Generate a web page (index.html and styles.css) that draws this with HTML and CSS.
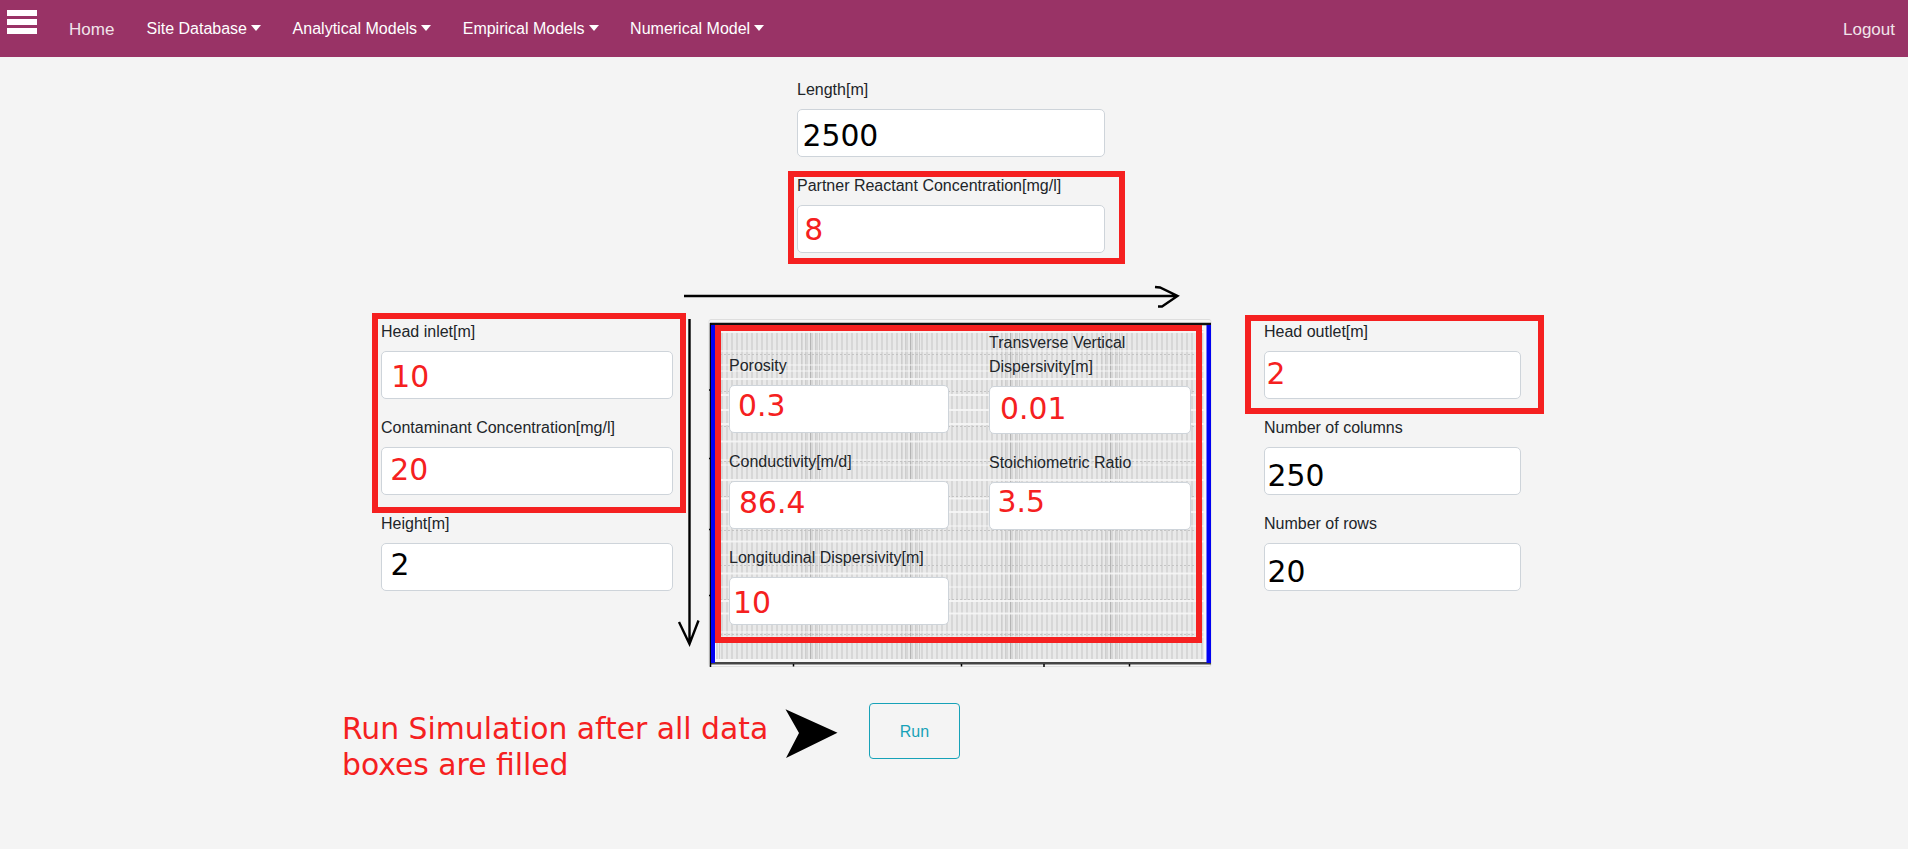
FILE: index.html
```html
<!DOCTYPE html>
<html lang="en">
<head>
<meta charset="utf-8">
<title>Numerical Model</title>
<link rel="stylesheet" href="styles.css">
</head>
<body>
<nav class="navbar">
  <div class="burger"><i></i><i></i><i></i></div>
  <a class="nav-home">Home</a>
  <a class="nav-menu">Site Database</a>
  <a class="nav-menu">Analytical Models</a>
  <a class="nav-menu">Empirical Models</a>
  <a class="nav-menu">Numerical Model</a>
  <a class="nav-logout">Logout</a>
</nav>
<main class="page">
  <section class="top fields">
    <div class="field"><label>Length[m]</label><div class="input"></div></div>
    <div class="field"><label>Partner Reactant Concentration[mg/l]</label><div class="input"></div></div>
  </section>
  <div class="model">
    <section class="left fields">
      <div class="field"><label>Head inlet[m]</label><div class="input"></div></div>
      <div class="field"><label>Contaminant Concentration[mg/l]</label><div class="input"></div></div>
      <div class="field"><label>Height[m]</label><div class="input"></div></div>
    </section>
    <section class="aquifer">
      <svg class="mesh" width="504" height="350" viewBox="708 318 504 350">
        <defs>
          <pattern id="cols" width="5" height="8" patternUnits="userSpaceOnUse"><path d="M1 0h2v8h-2z" fill="#d7d7d7"/></pattern>
          <pattern id="cols2" width="100" height="8" patternUnits="userSpaceOnUse"><path d="M1.500 0v8M5.500 0v8M15.500 0v8M19.500 0v8" stroke="#cdcdcd"/><path d="M10.500 0v8" stroke="#b4b4b4"/></pattern>
        </defs>
        <rect x="709" y="319.5" width="502" height="347" rx="2" fill="#f7f7f7" stroke="#dedede"/>
        <rect x="716" y="330" width="488" height="329" fill="#e9e9e9"/>
        <rect x="716" y="330" width="488" height="329" fill="url(#cols)"/>
        <rect x="716" y="330" width="488" height="329" fill="url(#cols2)"/>
        <path d="M716 332h488M716 379h488M716 395h488M716 410h488M716 424h488M716 441.500h488M716 480h488M716 498.500h488M716 512h488M716 541.500h488M716 573.500h488M716 601h488M716 613.500h488" stroke="#f8f8f8" stroke-width="2" opacity=".85"/>
        <path d="M716 351h488M716 365h488M716 371h488M716 460h488M716 465h488M716 526h488M716 555h488M716 587h488M716 632h488M716 637h488" stroke="#fafafa" stroke-width="2" opacity=".45"/>
        <path d="M716 354.500h488M716 391.500h488M716 426.500h488M716 461.500h488M716 496.500h488M716 530.500h488M716 565.500h488M716 599.500h488M716 634.500h488" stroke="#bdbdbd" stroke-dasharray="2 2" opacity=".8"/>
        <path d="M710 324h501" stroke="#111" stroke-width="2.4"/>
        <path d="M710 663.3h501" stroke="#444" stroke-width="2.4"/>
        <path d="M710.5 323v344M709 390h2M709 458.500h2M709 529.500h2M709 595.500h2M793.500 664v2.500M961.500 664v2.500M1044 664v3M1129.500 664v2.500" stroke="#000" stroke-width="1.500"/>
        <path d="M711 325h4v338h-4zM1206.500 325h4.500v338h-4.500z" fill="#0202f2"/>
      </svg>
      <div class="aq-a fields">
        <div class="field"><label>Porosity</label><div class="input"></div></div>
        <div class="field"><label>Conductivity[m/d]</label><div class="input"></div></div>
        <div class="field"><label>Longitudinal Dispersivity[m]</label><div class="input"></div></div>
      </div>
      <div class="aq-b fields">
        <div class="field"><label>Transverse Vertical Dispersivity[m]</label><div class="input"></div></div>
        <div class="field"><label>Stoichiometric Ratio</label><div class="input"></div></div>
      </div>
    </section>
    <section class="right fields">
      <div class="field"><label>Head outlet[m]</label><div class="input"></div></div>
      <div class="field"><label>Number of columns</label><div class="input"></div></div>
      <div class="field"><label>Number of rows</label><div class="input"></div></div>
    </section>
  </div>
  <button class="run">Run</button>
</main>
<svg class="notes" width="1908" height="849" viewBox="0 0 1908 849">
  <g class="arrows">
    <path d="M684 296h493M1155 287l5 .5L1177.500 296L1162 306.500h-4"/>
    <path d="M689.500 319v324M679 622l10.500 22L698.500 620.500"/>
  </g>
  <path d="M785.500 709.300L837.500 732.800L786 758L799 733z"/>
  <g class="frames">
    <rect x="791" y="174" width="331" height="87"/>
    <rect x="375" y="316" width="308" height="194"/>
    <rect x="718" y="328" width="481" height="312"/>
    <rect x="1248" y="318" width="293" height="93"/>
  </g>
  <g class="values">
    <text x="802.500" y="146">2500</text>
    <text x="390.500" y="575">2</text>
    <text x="1267.500" y="486">250</text>
    <text x="1267.500" y="582">20</text>
  </g>
  <g class="values key">
    <text x="804.300" y="239.500">8</text>
    <text x="391.300" y="387">10</text>
    <text x="390.300" y="480">20</text>
    <text x="738" y="415.500">0.3</text>
    <text x="739" y="512.500">86.4</text>
    <text x="733" y="613">10</text>
    <text x="1000" y="418.500">0.01</text>
    <text x="997.500" y="511.500">3.5</text>
    <text x="1266.500" y="384">2</text>
    <text x="342" y="739">Run Simulation after all data</text>
    <text x="342" y="775">boxes are filled</text>
  </g>
</svg>
</body>
</html>
```
FILE: styles.css
```css
* { box-sizing: border-box; }
body {
  margin: 0;
  height: 849px;
  overflow: hidden;
  background: #f4f4f4;
  color: #212529;
  font: 16px/24px "Liberation Sans", Arial, sans-serif;
}
.navbar {
  display: flex;
  height: 57px;
  padding: 0 13px 0 7px;
  background: #993366;
  color: #f1e4ea;
  line-height: 57px;
}
.burger {
  display: flex;
  flex-direction: column;
  gap: 3.5px;
  width: 30px;
  margin-right: 32px;
  padding-top: 10px;
}
.burger i { height: 5.5px; background: #fff; }
.nav-home, .nav-logout { font-size: 17px; line-height: 59px; }
.nav-home { width: 77.5px; }
.nav-logout { margin-left: auto; }
.nav-menu { margin-right: 31.6px; color: #fff; }
.nav-menu::after {
  content: "";
  display: inline-block;
  margin-left: 4px;
  vertical-align: 3px;
  border-top: 6px solid;
  border-left: 5px solid transparent;
  border-right: 5px solid transparent;
}
.page { padding-top: 20px; }
.fields { display: flex; flex-direction: column; gap: 16px; }
.field label { display: block; padding-top: 1px; margin-bottom: 7px; }
.input {
  height: 48px;
  border: 1px solid #ced4da;
  border-radius: 5px;
  background: #fff;
}
.top { width: 308px; margin-left: 797px; }
.model {
  display: flex;
  align-items: flex-start;
  height: 350px;
  margin: 65px 0 0 381px;
}
.left { width: 292px; margin: 1px 35px 0 0; }
.aquifer {
  display: grid;
  grid-template-columns: 220px 202px;
  column-gap: 40px;
  align-items: start;
  width: 504px;
  height: 350px;
  padding-left: 21px;
}
.mesh { grid-area: 1 / 1; margin-left: -21px; }
.aq-a { grid-area: 1 / 1; margin-top: 35px; }
.aq-b { grid-area: 1 / 2; margin-top: 12px; }
.right { width: 257px; margin: 1px 0 0 52px; }
.run {
  display: block;
  width: 91px;
  height: 56px;
  margin: 35px 0 0 869px;
  padding: 1px 0 0;
  border: 1px solid #17a2b8;
  border-radius: 4px;
  background: transparent;
  color: #17a2b8;
  font: inherit;
}
.notes { position: absolute; z-index: 2; left: 0; top: 0; pointer-events: none; }
.arrows { fill: none; stroke: #000; stroke-width: 2.4; }
.frames { fill: none; stroke: #f52020; stroke-width: 6; }
.values { font: 29.8px "DejaVu Sans", sans-serif; }
.key { fill: #f52020; }
```
